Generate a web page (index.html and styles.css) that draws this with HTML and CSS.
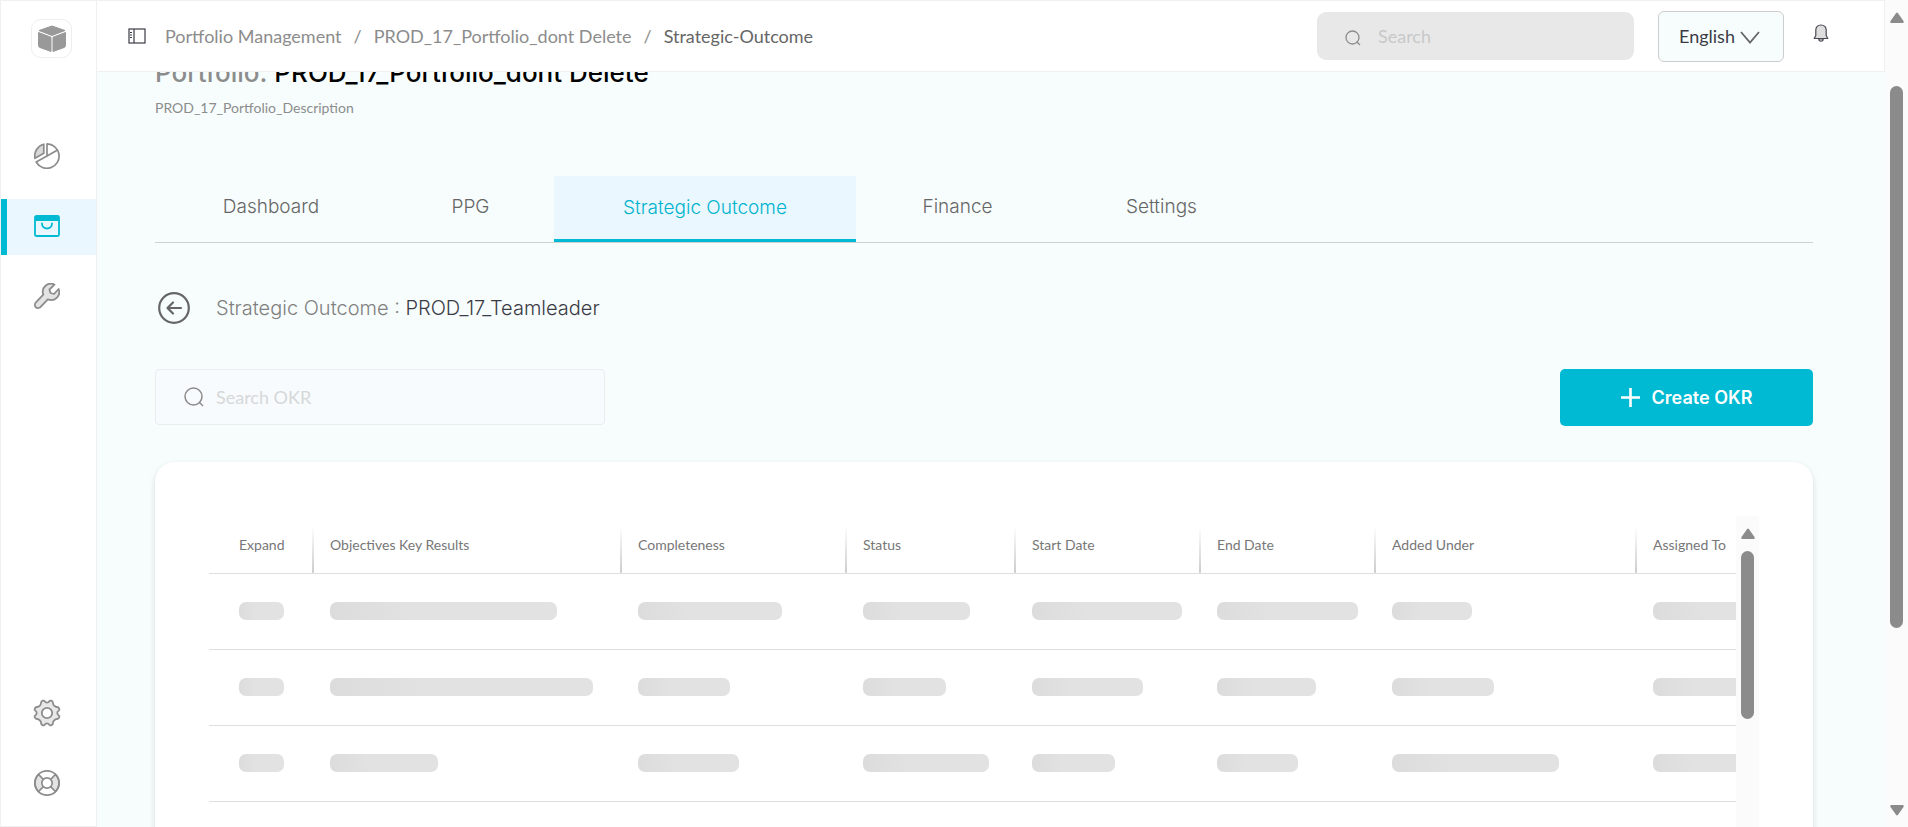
FILE: index.html
```html
<!DOCTYPE html>
<html lang="en">
<head>
<meta charset="utf-8">
<title>Strategic Outcome</title>
<link rel="stylesheet" href="styles.css">
</head>
<body>
<div class="app">
  <aside class="sidebar">
    <a class="logo" href="#" aria-label="Home">
      <svg width="30" height="28" viewBox="0 0 30 28" fill="#999"><path d="M15 1 L28 5.500 L15 10.500 L2 5.500Z" stroke="#999" stroke-width="1" stroke-linejoin="round"/><path d="M1.500 7.500 L14 12.200 V26.500 L3 22.500 Q1.500 22 1.500 20.500Z" stroke="#999" stroke-width="1" stroke-linejoin="round"/><path d="M28.500 7.500 L16 12.200 V26.500 L27 22.500 Q28.500 22 28.500 20.500Z" stroke="#999" stroke-width="1" stroke-linejoin="round"/></svg>
    </a>
    <nav class="side-nav" aria-label="Main">
      <a class="side-link" href="#" aria-label="Dashboard">
        <svg width="26" height="26" viewBox="0 0 26 26" fill="none" stroke="#8c8c8c" stroke-width="1.700" stroke-linejoin="round"><path d="M9.800 1.200 A12.300 12.300 0 0 0 .9 15.300 L9.800 10.300Z" fill="#d9d9d9"/><path d="M13 .9 V13 L2.200 19 A12.200 12.200 0 1 0 13 .9Z"/><path d="M13 13 L23.600 7"/></svg>
      </a>
      <a class="side-link active" href="#" aria-label="Portfolio" aria-current="page">
        <svg width="26" height="22" viewBox="0 0 26 22" fill="none" stroke="#00bad3"><rect x="1" y="1" width="24" height="20" rx="1.500" stroke-width="1.800"/><path d="M1 1.500h24v4.500H1z" fill="#00bad3" stroke="none"/><path d="M8 8.500c0 3 2.200 5 5 5s5-2 5-5" stroke-width="1.800" stroke-linecap="round"/></svg>
      </a>
      <a class="side-link" href="#" aria-label="Tools">
        <svg width="26" height="26" viewBox="0 0 26 26" fill="#e3e3e3" stroke="#8c8c8c" stroke-width="1.800" stroke-linejoin="round"><path d="M20.500 1.700 A8 8 0 0 0 9.300 11.600 L1.900 19.400 A3.100 3.100 0 0 0 6.400 24.200 L13.800 16.300 A8 8 0 0 0 24.600 6 L20 11 L16.500 10 L15.400 6.500Z"/></svg>
      </a>
    </nav>
    <nav class="side-nav side-foot" aria-label="Support">
      <a class="side-link" href="#" aria-label="Settings">
        <svg width="28" height="28" viewBox="-14 -14 28 28" fill="#e8e8e8" stroke="#8c8c8c" stroke-width="1.800" stroke-linejoin="round"><circle r="10" stroke="none"/><path id="teeth" d="M0 -10.300 Q1.600 -10.300 2.200 -11.600 Q2.800 -12.800 4.200 -12.300 Q6 -11.600 6 -10 Q5.800 -8.600 7.300 -7.300 Q8.600 -5.800 10 -6 Q11.600 -6 12.300 -4.200 Q12.800 -2.800 11.600 -2.200 Q10.300 -1.600 10.300 0"/><use href="#teeth" transform="rotate(90)"/><use href="#teeth" transform="rotate(180)"/><use href="#teeth" transform="rotate(270)"/><circle r="5.200" fill="#fff"/></svg>
      </a>
      <a class="side-link" href="#" aria-label="Help">
        <svg width="26" height="26" viewBox="-13 -13 26 26" fill="none" stroke="#8c8c8c" stroke-width="1.700"><path d="M-8.500 -8.500 A12 12 0 0 0 -8.500 8.500 L0 0 L8.500 8.500 A12 12 0 0 0 8.500 -8.500 L0 0Z" fill="#e3e3e3"/><circle r="12.100"/><circle r="5.200" fill="#fff"/></svg>
      </a>
    </nav>
  </aside>

  <div class="page">
    <header class="topbar">
      <button class="icon-button" type="button" aria-label="Toggle sidebar">
        <svg width="18" height="16" viewBox="0 0 18 16" fill="none" stroke="#3b3b46"><rect x="1" y="1" width="16" height="14" stroke-width="1.200"/><path d="M6 1v14" stroke-width="1.200"/><path d="M2 4.500h2M2 7h2M2 9.500h2"/></svg>
      </button>
      <nav class="crumbs" aria-label="Breadcrumb">
        <a href="#">Portfolio Management</a><span>/</span><a href="#">PROD_17_Portfolio_dont Delete</a><span>/</span><a class="current" href="#" aria-current="page">Strategic-Outcome</a>
      </nav>
      <label class="search search-top">
        <svg width="16" height="16" viewBox="0 0 16 16" fill="none" stroke="#8c8c8c" stroke-width="1.300"><circle cx="7.500" cy="7.500" r="6.500"/><path d="M11.500 11.500l3.500 3.500"/></svg>
        <input type="search" placeholder="Search" aria-label="Search">
      </label>
      <div class="language">
        <select aria-label="Language"><option>English</option></select>
        <svg width="20" height="13" viewBox="0 0 20 13" fill="none" stroke="#666" stroke-width="1.800"><path d="M1 1l9 10.500L19 1"/></svg>
      </div>
      <button class="icon-button bell" type="button" aria-label="Notifications">
        <svg width="16" height="18" viewBox="0 0 16 18" fill="#dedede" stroke="#4a4a55" stroke-width="1.200" stroke-linejoin="round"><path d="M5.800 15a2.200 2.200 0 0 0 4.400 0Z" fill="#fff"/><path d="M8 1C4.800 1 2.800 3.200 2.800 6v5.500L1.200 14.500h13.600L13.200 11.500V6C13.200 3.200 11.200 1 8 1Z"/></svg>
      </button>
    </header>

    <main class="content">
      <h1 class="title"><span>Portfolio:</span> PROD_17_Portfolio_dont Delete</h1>
      <p class="description">PROD_17_Portfolio_Description</p>

      <nav class="tabs" aria-label="Portfolio sections">
        <a href="#">Dashboard</a>
        <a href="#">PPG</a>
        <a class="active" href="#" aria-current="page">Strategic Outcome</a>
        <a href="#">Finance</a>
        <a href="#">Settings</a>
      </nav>

      <div class="outcome">
        <button class="icon-button" type="button" aria-label="Back">
          <svg width="32" height="32" viewBox="0 0 32 32" fill="none" stroke="#666"><circle cx="16" cy="16" r="14.800" stroke-width="2.200"/><path d="M23 16H10M15 10.500L9.500 16l5.500 5.500" stroke-width="2.200" stroke-linecap="round" stroke-linejoin="round"/></svg>
        </button>
        <h2><span>Strategic Outcome :</span> PROD_17_Teamleader</h2>
      </div>

      <div class="toolbar">
        <label class="search search-okr">
          <svg width="20" height="20" viewBox="0 0 20 20" fill="none" stroke="#8c8c8c" stroke-width="1.500"><circle cx="9.500" cy="9.500" r="8.500"/><path d="M15 15l4 4"/></svg>
          <input type="search" placeholder="Search OKR" aria-label="Search OKR">
        </label>
        <button class="create" type="button">
          <svg width="19" height="19" viewBox="0 0 19 19" stroke="#fff" stroke-width="2.600"><path d="M9.500 0v19M0 9.500h19"/></svg>
          Create OKR
        </button>
      </div>

      <section class="card">
        <div class="table-wrap">
          <table>
            <colgroup><col class="c1"><col class="c2"><col class="c3"><col class="c4"><col class="c5"><col class="c6"><col class="c7"><col class="c8"></colgroup>
            <thead>
              <tr><th>Expand</th><th>Objectives Key Results</th><th>Completeness</th><th>Status</th><th>Start Date</th><th>End Date</th><th>Added Under</th><th>Assigned To</th></tr>
            </thead>
            <tbody>
              <tr><td><i style="width:45px"></i></td><td><i style="width:227px"></i></td><td><i style="width:144px"></i></td><td><i style="width:107px"></i></td><td><i style="width:150px"></i></td><td><i style="width:141px"></i></td><td><i style="width:80px"></i></td><td><i style="width:150px"></i></td></tr>
              <tr><td><i style="width:45px"></i></td><td><i style="width:263px"></i></td><td><i style="width:92px"></i></td><td><i style="width:83px"></i></td><td><i style="width:111px"></i></td><td><i style="width:99px"></i></td><td><i style="width:102px"></i></td><td><i style="width:110px"></i></td></tr>
              <tr><td><i style="width:45px"></i></td><td><i style="width:108px"></i></td><td><i style="width:101px"></i></td><td><i style="width:126px"></i></td><td><i style="width:83px"></i></td><td><i style="width:81px"></i></td><td><i style="width:167px"></i></td><td><i style="width:110px"></i></td></tr>
              <tr><td><i style="width:45px"></i></td><td><i style="width:180px"></i></td><td><i style="width:101px"></i></td><td><i style="width:90px"></i></td><td><i style="width:100px"></i></td><td><i style="width:90px"></i></td><td><i style="width:120px"></i></td><td><i style="width:110px"></i></td></tr>
            </tbody>
          </table>
        </div>
        <div class="scrollbar scrollbar-table" aria-hidden="true">
          <svg width="14" height="12" viewBox="0 0 14 12" fill="#8b8b8b"><path d="M6 1.200Q7 0 8 1.200L13.500 9Q14.300 11 12.500 11H1.500Q-.3 11 .5 9Z"/></svg>
          <div class="thumb"></div>
        </div>
      </section>
    </main>
  </div>

  <div class="scrollbar scrollbar-page" aria-hidden="true">
    <svg width="14" height="12" viewBox="0 0 14 12" fill="#8b8b8b"><path d="M6 1.200Q7 0 8 1.200L13.500 9Q14.300 11 12.500 11H1.500Q-.3 11 .5 9Z"/></svg>
    <div class="track"><div class="thumb"></div></div>
    <svg width="14" height="12" viewBox="0 0 14 12" fill="#8b8b8b"><path d="M6 10.800Q7 12 8 10.800L13.500 3Q14.300 1 12.500 1H1.500Q-.3 1 .5 3Z"/></svg>
  </div>
</div>
</body>
</html>
```
FILE: styles.css
```css
* { box-sizing: border-box; }

body {
  margin: 0;
  font-family: Lato, "Open Sans", sans-serif;
  font-size: 18px;
  color: #666;
  background: #f7fdfd;
}

a { color: inherit; text-decoration: none; }
svg { display: block; flex: none; }

.app { display: flex; height: 100vh; overflow: hidden; }

.sidebar {
  flex: none;
  width: 97px;
  display: flex;
  flex-direction: column;
  background: #fff;
  border: 1px solid #f0f0f0;
}

.logo {
  width: 41px;
  height: 39px;
  margin: 18px 0 0 30px;
  display: grid;
  place-items: center;
  border: 1px solid #eee;
  border-radius: 10px;
}

.side-nav { display: flex; flex-direction: column; gap: 14px; margin-top: 71px; }
.side-foot { margin: auto 0 14px; }

.side-link {
  height: 56px;
  display: grid;
  place-items: center;
  padding: 0 3px 2px 0;
}
.side-link.active {
  background: #eaf7fe;
  border-left: 6px solid #00bad3;
  padding-right: 9px;
}

.page { flex: 1; min-width: 0; display: flex; flex-direction: column; }

.topbar {
  flex: none;
  position: relative;
  z-index: 1;
  height: 72px;
  display: flex;
  align-items: center;
  padding: 0 55px 0 31px;
  background: #fff;
  border: solid #f0f0f0;
  border-width: 1px 1px 1px 0;
}

.icon-button { padding: 0; border: 0; background: none; cursor: pointer; }

.crumbs { display: flex; gap: 12px; margin-left: 19px; margin-right: auto; color: #8c8c8c; white-space: nowrap; }
.crumbs .current { color: #666; }

.search { display: flex; align-items: center; }
.search input {
  flex: 1;
  min-width: 0;
  padding: 0;
  border: 0;
  outline: 0;
  background: none;
  font: inherit;
}
.search input::placeholder { color: #c8c8c8; opacity: 1; }

.search-top {
  width: 317px;
  height: 48px;
  padding: 0 28px;
  gap: 17px;
  background: #e8e8e8;
  border-radius: 9px;
}
.search-top svg { margin-top: 4px; }

.language { position: relative; margin: 0 29px 0 24px; }
.language select {
  width: 126px;
  height: 51px;
  padding: 0 20px;
  appearance: none;
  border: 1px solid #ccc;
  border-radius: 6px;
  background: #f7fdfd;
  font: inherit;
  color: #3b3b46;
}
.language svg { position: absolute; right: 24px; top: 20px; pointer-events: none; }
.bell { margin-bottom: 6px; }

.content { flex: 1; min-height: 0; padding: 0 72px 0 58px; }

.title {
  margin: -17px 0 0;
  font: 500 26px/36px Inter, sans-serif;
  color: #000;
}
.title span { color: #8c8c8c; }

.description { margin: 8px 0 0; font-size: 14px; line-height: 18px; color: #8c8c8c; }

.tabs {
  display: grid;
  grid-template-columns: 232px 167px 302px 203px 205px;
  margin-top: 59px;
  border-bottom: 1px solid #d0d0d0;
  font: 300 19px/62px Inter, sans-serif;
  text-align: center;
}
.tabs a { height: 66px; }
.tabs .active { color: #00b4cf; background: #eaf7fe; border-bottom: 3px solid #00bad3; line-height: 64px; }

.outcome { display: flex; align-items: center; gap: 26px; margin: 49px 0 0 3px; }
.outcome h2 { margin: 0; font: 300 20px/32px Inter, sans-serif; color: #3b3b46; }
.outcome span { color: #808080; }

.toolbar { display: flex; justify-content: space-between; margin-top: 45px; }
.search-okr {
  width: 450px;
  height: 56px;
  padding: 0 28px;
  gap: 12px;
  border: 1px solid #e9edee;
  border-radius: 4px;
  background: #f8fbfd;
}
.search-okr input::placeholder { color: #d5d8d9; }

.create {
  width: 253px;
  height: 57px;
  display: flex;
  align-items: center;
  justify-content: center;
  gap: 12px;
  border: 0;
  border-radius: 5px;
  background: #00bad3;
  color: #fff;
  font: 600 18px/24px Inter, sans-serif;
}

.card {
  display: flex;
  height: 500px;
  margin-top: 36px;
  padding: 54px 54px 0;
  background: #fff;
  border-radius: 20px;
  box-shadow: 0 3px 6px rgba(0, 0, 0, .14);
}

.table-wrap { flex: 1; min-width: 0; overflow: hidden; }

table { width: 1627px; table-layout: fixed; border-collapse: collapse; margin-top: 10px; }
.c1 { width: 103px; }
.c2 { width: 308px; }
.c3 { width: 225px; }
.c4 { width: 169px; }
.c5 { width: 185px; }
.c6 { width: 175px; }
.c7 { width: 261px; }
.c8 { width: 201px; }

th {
  height: 47px;
  padding: 0 0 8px 18px;
  border-bottom: 1px solid #dedede;
  background: linear-gradient(#fff, #ccc) left / 2px 100% no-repeat;
  font-size: 14px;
  font-weight: 400;
  line-height: 18px;
  text-align: left;
  color: #777;
}
td { height: 76px; padding: 0 0 0 18px; border-bottom: 1px solid #dedede; }
th:first-child, td:first-child { padding-left: 30px; }
th:first-child { background: none; }

td i {
  display: block;
  height: 18px;
  border-radius: 7px;
  background: linear-gradient(90deg, #dcdcdc, #e2e2e2 37%);
}

.scrollbar {
  flex: none;
  width: 23px;
  display: flex;
  flex-direction: column;
  align-items: center;
  background: #fbfbfb;
}
.thumb { width: 13px; border-radius: 7px; background: #8b8b8b; }
.scrollbar-table { padding-top: 12px; gap: 11px; }
.scrollbar-table .thumb { height: 168px; }
.scrollbar-page { padding: 12px 0 11px; }
.track { flex: 1; padding-top: 62px; }
.track .thumb { height: 542px; }
```
